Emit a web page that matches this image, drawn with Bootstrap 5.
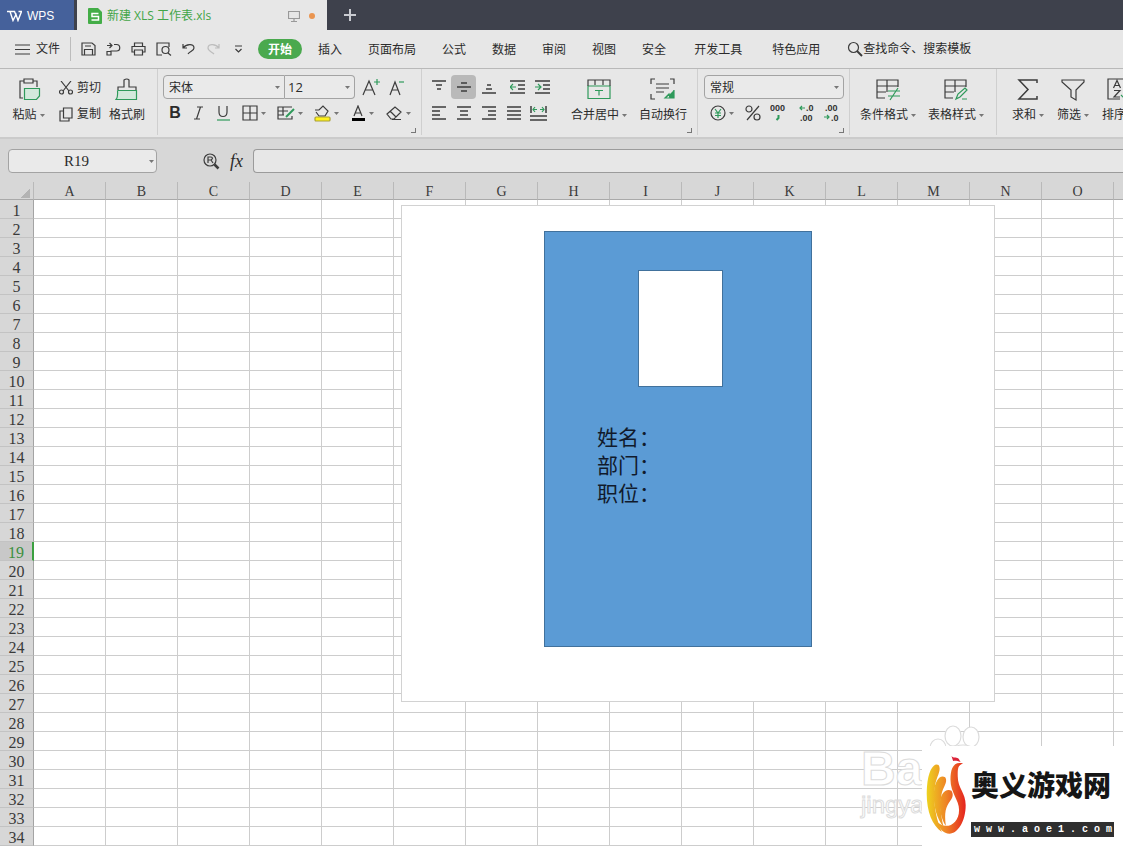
<!DOCTYPE html>
<html lang="zh-CN">
<head>
<meta charset="utf-8">
<meta name="viewport" content="width=device-width, initial-scale=1">
<title>新建 XLS 工作表.xls - WPS</title>
<link href="https://cdn.jsdelivr.net/npm/bootstrap@5.3.0/dist/css/bootstrap.min.css" rel="stylesheet">
<style>
body{font-family:"Liberation Sans","Noto Sans CJK SC",sans-serif;font-size:12px;line-height:16px;color:#2b2b2b;background:#fff}
button,select,input{font:inherit;color:inherit}
button{border:0;background:none;padding:0;white-space:nowrap}
svg{display:block;fill:none;stroke:#3c3c3c;stroke-width:1.2;flex:none}
svg .g{stroke:#2f9a5b}
.titlebar{height:30px;background:#3e414c}
.brand{width:74px;background:#45619b;color:#fff;margin-right:3px;padding:2px 0 0 7px;gap:5px}
.brand svg{stroke:#fff;stroke-width:1.4}
.doc{width:250px;background:#e7e7e7;color:#43a548;padding:2px 12px 0 11px;gap:5px}
.doc button{font-family:"Open Sans","Noto Sans CJK SC",sans-serif}
.dot{width:6px;height:6px;background:#ea9550}
.plus{width:46px}
.plus svg{stroke:#c9cbd1;stroke-width:2}
.menubar{height:38px;background:#e7e7e7}
.file{width:71px;height:24px;padding-left:15px;gap:6px;border-right:1px solid #bcbcbc}
.quick{width:187px;padding-left:5px}
.quick button{width:25px;height:24px}
.tabs{gap:26px}
.tabs button{padding-top:2px}
.tabs .on{background:#4aa94e;color:#fff;font-weight:bold;border-radius:10px;height:20px;padding:1px 10px 0;margin-right:-10px}
.tabs .four{padding:2px 2px 0}
.find{gap:0;padding-left:25px}
.find input{width:130px;border:0;background:none;padding:0;outline:0}
.find input::placeholder{color:#2b2b2b;opacity:1}
.ribbon{height:71px;background:#e7e7e7;border-top:1px solid #b9b9b9;border-bottom:2px solid #cbcbcb;overflow:hidden}
.pane{position:relative;padding:6px 0 0 6px;height:66px;border-right:1px solid #cfcfcf;flex:none}
.tools{gap:2px}
.line{height:24px;padding-top:2px}
.tool{height:24px;width:25px}
.tool.wide{width:36px;gap:3px}
.tool.on{background:#b9b9b9;border-radius:4px}
.big{height:50px}
.big>svg{height:30px;margin:0 auto}
.big>span{height:20px;gap:3px}
.corner{position:absolute;right:5px;bottom:2px;width:5px;height:5px;border:solid #777;border-width:0 1px 1px 0}
.caret{width:5px;height:3px;fill:#777;stroke:none}
.box{appearance:none;height:24px;border:1px solid #a3a3a3;background:#eaeaea url("data:image/svg+xml,%3Csvg xmlns='http://www.w3.org/2000/svg' width='5' height='3'%3E%3Cpath d='M0 0h5L2.5 3z' fill='%23777'/%3E%3C/svg%3E") no-repeat right 4px center;padding:2px 0 0 5px;border-radius:4px}
.fname{width:122px;border-radius:4px 0 0 4px}
.fsize{width:70px;border-radius:0 4px 4px 0;border-left:0;padding:0 0 0 3px;margin-right:3px;font-family:"Open Sans",sans-serif;font-size:13px}
.nformat{width:140px}
.bold{font-size:16px;font-weight:bold}
.g000{stroke:none;fill:#333;font:bold 9px "Liberation Sans",sans-serif}
.formula{height:43px;background:#d7d7d7;padding:10px 0 9px 8px}
.cellname{width:149px;text-align:center;font:15px "Liberation Serif",serif;padding:0 12px 0 0;background-position:right 2px center}
.locate{margin-left:46px}
.fx{font:italic 18px "Liberation Serif",serif;width:33px}
.expr{border:1px solid #9b9b9b;border-right:0;border-radius:4px 0 0 4px;background:#e7e7e7;height:24px;padding:0 8px}
.sheet{position:relative;flex:1;overflow:hidden;min-height:0}
.cells{table-layout:fixed;border-collapse:separate;border-spacing:0;width:0;font:16px/16px "Liberation Serif",serif;color:#3a3a3a}
.cells col{width:72px}
.cells col:first-child{width:34px}
.cells td,.cells th{padding:0;height:19px;border:solid #cdcdcd;border-width:0 1px 1px 0;font-weight:normal;text-align:center;overflow:hidden}
.cells thead th{height:18px;line-height:14px;font-size:14px;background:#d7d7d7;border-color:#b5b5b5 #b9b9b9 #a9a9a9;padding-top:3px}
.cells tbody th{background:#d7d7d7;border-right-color:#a4a4a4;border-bottom-color:#c3c3c3;line-height:14px;padding-top:4px}
.cells tbody .here{background:#c8c8c8;color:#3b8f3e;border-right:2px solid #3ba040}
.all{width:10px;height:9px;margin:2px 3px 0 auto;background:linear-gradient(135deg,transparent 50%,#b3b3b3 50%)}
.canvas{position:absolute;left:401px;top:23px;width:594px;height:497px;background:#fff;border:1px solid #d2d2d2;padding:25px 0 0 142px}
.pass{width:268px;height:416px;background:#5b9bd5;border:1px solid #41719c;padding:38px 0 0 52px;color:#111a2c;font-size:21px;line-height:28px}
.photo{width:85px;height:117px;background:#fff;border:1px solid #41719c;margin:0 0 37px 41px}
.mark-a{position:absolute;right:142px;bottom:17px;width:120px;height:104px;color:#fff;font:24px/26px "Liberation Sans",sans-serif;-webkit-text-stroke:1px #dcdcdc}
.mark-a b{display:block;font-size:48px;line-height:46px;padding-top:21px}
.paw{position:absolute;left:68px;top:0}
.paw ellipse{fill:#fff;stroke:#dcdcdc}
.mark-b{position:absolute;right:0;bottom:0;width:201px;height:100px;background:#fff;padding:8px 9px 0 4px;gap:4px}
.flame{stroke:none}
.site{font-size:28px;line-height:66px;font-weight:900;color:#161616;white-space:nowrap}
.addr{background:#2f2f2f;color:#fff;font:bold 10px/15px "Liberation Mono",monospace;height:15px;padding-left:3px;margin-top:2px;white-space:nowrap}
</style>
<script src="https://cdn.jsdelivr.net/npm/bootstrap@5.3.0/dist/js/bootstrap.bundle.min.js"></script>
</head>
<body class="vh-100 d-flex flex-column overflow-hidden">
<svg class="d-none"><symbol id="down" viewBox="0 0 5 3"><path d="M0 0h5L2.500 3z"/></symbol></svg>

<header class="titlebar d-flex">
  <button class="brand d-flex align-items-center"><svg width="15" height="12"><path d="M0 1.500h3l3 9 3-6 2 6 3.500-9h-3M3.500 1.500h4l2 5"/></svg>WPS</button>
  <div class="doc d-flex align-items-center">
    <svg width="14" height="16"><path d="M1 0h9l4 4v11a1 1 0 0 1-1 1H1a1 1 0 0 1-1-1V1a1 1 0 0 1 1-1" fill="#43ad47" stroke="none"/><path d="M10.500 5.500H4v3h6.500v3.500H3.500" stroke="#fff" stroke-width="1.500"/></svg>
    <button>新建 XLS 工作表.xls</button>
    <svg class="ms-auto me-1" width="12" height="12" style="stroke:#999"><path d="M.5 1.500h11v7H.5zM6 8.500v3M3 11.500h6"/></svg>
    <span class="dot rounded-circle"></span>
  </div>
  <button class="plus d-flex align-items-center justify-content-center" aria-label="新建标签"><svg width="12" height="12"><path d="M6 0v12M0 6h12"/></svg></button>
</header>

<nav class="menubar d-flex align-items-center text-nowrap">
  <button class="file d-flex align-items-center"><svg width="15" height="11"><path d="M0 1h15M0 5.500h15M0 10h15"/></svg>文件</button>
  <div class="quick d-flex">
    <button class="d-flex align-items-center justify-content-center" aria-label="保存"><svg width="15" height="14"><path d="M1 1h10l3 2.500V13H1zM3.500 13V7.500h8V13M4 4h6"/></svg></button>
    <button class="d-flex align-items-center justify-content-center" aria-label="输出"><svg width="15" height="14"><path d="M1 3.500h5M3.500 1 6 3.500 3.500 6M8 2.500h2.500a3 3 0 0 1 0 6.500H5v4H1V9.500h4"/></svg></button>
    <button class="d-flex align-items-center justify-content-center" aria-label="打印"><svg width="15" height="14"><path d="M3.500 4.500V1h8v3.500M3.500 10H1V4.500h13V10h-2.500M3.500 8h8v5h-8z"/></svg></button>
    <button class="d-flex align-items-center justify-content-center" aria-label="打印预览"><svg width="16" height="14"><path d="M6 13H1V1h12v4M12 11l3 2.500"/><circle cx="9.500" cy="8" r="3.500"/></svg></button>
    <button class="d-flex align-items-center justify-content-center" aria-label="撤销"><svg width="13" height="12"><path d="M1 1v4h4M1 5c3-4 11-5 11 0 0 3-4 3-6 6"/></svg></button>
    <button class="d-flex align-items-center justify-content-center" aria-label="恢复"><svg width="13" height="12" style="stroke:#bdbdbd"><path d="M12 1v4H8M12 5C9 1 1 0 1 5c0 3 4 4 6 6"/></svg></button>
    <button class="d-flex align-items-center justify-content-center" aria-label="更多"><svg width="9" height="8"><path d="M1 1h7M1.500 4l3 3 3-3"/></svg></button>
  </div>
  <div class="tabs d-flex align-items-center">
    <button class="on">开始</button><button>插入</button><button>页面布局</button><button>公式</button><button>数据</button><button>审阅</button><button>视图</button><button>安全</button><button class="four">开发工具</button><button class="four">特色应用</button>
  </div>
  <label class="find d-flex align-items-center"><svg width="16" height="16" aria-hidden="true"><circle cx="6.500" cy="6.500" r="5"/><path d="m10 10 5 5" stroke-width="2"/></svg><input aria-label="查找" placeholder="查找命令、搜索模板"></label>
</nav>

<section class="ribbon d-flex">
  <div class="pane d-flex" style="width:158px">
    <button class="big" style="width:45px"><svg width="26" height="30"><path d="M7 23H4V6h4m9 0h4v6M8 4h9v4H8z"/><path class="g" d="M8.500 13.500h15V21l-3 3.500h-12z" fill="#d3e9dc"/></svg><span class="d-flex justify-content-center align-items-center">粘贴<svg class="caret"><use href="#down"/></svg></span></button>
    <div class="tools d-flex flex-column ps-2 pe-1">
      <button class="line d-flex align-items-center gap-1"><svg width="14" height="14"><path d="M2 0l8 10M12 0 4 10"/><circle cx="2.500" cy="11" r="2"/><circle cx="11.500" cy="11" r="2"/></svg>剪切</button>
      <button class="line d-flex align-items-center gap-1"><svg width="14" height="15"><path d="M4.500 1H13v10H4.500zM4 4H1v10h9v-3"/></svg>复制</button>
    </div>
    <button class="big ms-1"><svg width="24" height="30"><path class="g" d="M2.500 15.500h19v9H1q2-2 1.500-9" fill="#d3e9dc"/><path d="M3 15v-3h6V5q3-2 5 0v7h7v3"/></svg><span class="d-flex align-items-center">格式刷</span></button>
  </div>

  <div class="pane tools d-flex flex-column" style="width:264px">
    <div class="d-flex">
      <select class="box fname" aria-label="字体" style="margin-left:-1px"><option>宋体</option></select>
      <select class="box fsize" aria-label="字号"><option>12</option></select>
      <button class="tool d-flex align-items-center justify-content-center" aria-label="增大字号"><svg width="18" height="18"><path d="m1 17 6-14 6 14M3 12h8"/><path class="g" d="M12 4h6M15 1v6"/></svg></button>
      <button class="tool d-flex align-items-center justify-content-center" aria-label="减小字号"><svg width="18" height="18"><path d="m3 17 5-13 5 13M5 12h6"/><path class="g" d="M12 4h5"/></svg></button>
    </div>
    <div class="d-flex">
      <button class="tool bold" style="width:22px">B</button>
      <button class="tool d-flex align-items-center justify-content-center" aria-label="斜体"><svg width="12" height="14"><path d="M4 1h6M1 13h6M7.500 1l-4 12" /></svg></button>
      <button class="tool d-flex align-items-center justify-content-center" aria-label="下划线"><svg width="13" height="15"><path d="M2 0v6c0 6 8 6 8 0V0"/><path class="g" d="M0 14h13"/></svg></button>
      <button class="tool wide d-flex align-items-center justify-content-center" aria-label="边框"><svg width="16" height="16"><path d="M1 1h14v14H1zM8 1v14M1 8h14"/></svg><svg class="caret"><use href="#down"/></svg></button>
      <button class="tool wide d-flex align-items-center justify-content-center" aria-label="绘制边框"><svg width="18" height="16"><path d="M15 2H1v12h14v-3M1 6h10M1 10h6M6 2v8"/><path class="g" d="m9 12 8-8" stroke-width="2"/></svg><svg class="caret"><use href="#down"/></svg></button>
      <button class="tool wide d-flex align-items-center justify-content-center" aria-label="填充颜色"><svg width="17" height="17"><path d="M1 5h4l4-4 5 5-3 5H5L2 7"/><rect x="1" y="12" width="15" height="4" rx="1" fill="#fff21b" stroke="#aaa036"/></svg><svg class="caret"><use href="#down"/></svg></button>
      <button class="tool wide d-flex align-items-center justify-content-center" aria-label="字体颜色"><svg width="15" height="17"><path d="m3 11 4-10 4 10M4 8h6"/><path d="M1 14.500h13" stroke="#000" stroke-width="3"/></svg><svg class="caret"><use href="#down"/></svg></button>
      <button class="tool wide d-flex align-items-center justify-content-center" aria-label="清除"><svg width="17" height="16"><path d="m1 9 8-7 6 5-7 7H5zM4 6l6 6M6 14.500h9"/></svg><svg class="caret"><use href="#down"/></svg></button>
    </div>
    <i class="corner"></i>
  </div>

  <div class="pane d-flex" style="width:276px;padding-left:4px">
    <div class="tools d-flex flex-column me-3">
      <div class="d-flex">
        <button class="tool d-flex align-items-center justify-content-center" aria-label="顶端对齐"><svg width="14" height="14"><path d="M0 1h14M4 5h6M5 9h4" stroke-width="1.500"/></svg></button>
        <button class="tool on d-flex align-items-center justify-content-center" aria-label="垂直居中"><svg width="14" height="14"><path d="M4 3h6M0 7h14M4 11h6" stroke-width="1.500"/></svg></button>
        <button class="tool d-flex align-items-center justify-content-center" aria-label="底端对齐"><svg width="14" height="14"><path d="M5 5h4M4 9h6M0 13h14" stroke-width="1.500"/></svg></button>
        <button class="tool d-flex align-items-center justify-content-center ms-1" aria-label="减少缩进"><svg width="15" height="14"><path d="M0 1h15M8 5h7M8 9h7M0 13h15" stroke-width="1.500"/><path class="g" d="M0 7h6M3 4 0 7l3 3"/></svg></button>
        <button class="tool d-flex align-items-center justify-content-center" aria-label="增加缩进"><svg width="15" height="14"><path d="M0 1h15M8 5h7M8 9h7M0 13h15" stroke-width="1.500"/><path class="g" d="M0 7h6M3 4l3 3-3 3"/></svg></button>
      </div>
      <div class="d-flex">
        <button class="tool d-flex align-items-center justify-content-center" aria-label="左对齐"><svg width="14" height="14"><path d="M0 1h14M0 5h8M0 9h8M0 13h14" stroke-width="1.500"/></svg></button>
        <button class="tool d-flex align-items-center justify-content-center" aria-label="居中"><svg width="14" height="14"><path d="M0 1h14M3 5h8M3 9h8M0 13h14" stroke-width="1.500"/></svg></button>
        <button class="tool d-flex align-items-center justify-content-center" aria-label="右对齐"><svg width="14" height="14"><path d="M0 1h14M6 5h8M6 9h8M0 13h14" stroke-width="1.500"/></svg></button>
        <button class="tool d-flex align-items-center justify-content-center" aria-label="两端对齐"><svg width="14" height="14"><path d="M0 1h14M0 5h14M0 9h14M0 13h14" stroke-width="1.500"/></svg></button>
        <button class="tool d-flex align-items-center justify-content-center" aria-label="分散对齐"><svg width="17" height="15"><path d="M1 0v7M16 0v7M0 10h17M0 14h17" stroke-width="1.500"/><path class="g" d="M3 3.500h4M5 1 3 3.500 5 6M10 3.500h4M12 1l2 2.500L12 6"/></svg></button>
      </div>
    </div>
    <button class="big"><svg width="24" height="30"><path class="g" d="M1 11h22v12.500H1zM8 15.500h8M12 15.500v5"/><path d="M1 11V5h22v6M8 5v5M16 5v5"/></svg><span class="d-flex align-items-center">合并居中<svg class="caret"><use href="#down"/></svg></span></button>
    <button class="big" style="margin-left:12px"><svg width="26" height="30"><path d="M1 9V4h4M20 4h4v5M1 19v5h4M6 9h13M6 13h13M6 17h8" /><path class="g" d="M24 15v8h-8M19 19l-4 4h5z" fill="#2f9a5b"/></svg><span class="d-flex align-items-center">自动换行</span></button>
    <i class="corner"></i>
  </div>

  <div class="pane tools d-flex flex-column" style="width:152px">
    <select class="box nformat" aria-label="数字格式"><option>常规</option></select>
    <div class="d-flex">
      <button class="tool wide d-flex align-items-center justify-content-center" aria-label="货币"><svg width="16" height="16"><circle cx="8" cy="8" r="7"/><path class="g" d="m5 4 3 4 3-4M8 8v5M5 8h6M5 10.500h6"/></svg><svg class="caret"><use href="#down"/></svg></button>
      <button class="tool d-flex align-items-center justify-content-center" aria-label="百分比"><svg width="16" height="16"><circle cx="4" cy="4" r="3"/><circle cx="12" cy="12" r="3"/><path d="M14 1 2 15"/></svg></button>
      <button class="tool d-flex align-items-center justify-content-center" aria-label="千位分隔"><svg width="16" height="18"><text class="g000" x="0" y="7">000</text><path class="g" d="M8.500 11v3l-2 2" stroke-width="2"/></svg></button>
      <button class="tool d-flex align-items-center justify-content-center ms-1" aria-label="增加小数位数"><svg width="15" height="18"><path class="g" d="M1 4h5M3 2 1 4l2 2"/><text class="g000" x="7" y="7">.0</text><text class="g000" x="1" y="17">.00</text></svg></button>
      <button class="tool d-flex align-items-center justify-content-center" aria-label="减少小数位数"><svg width="15" height="18"><text class="g000" x="1" y="7">.00</text><path class="g" d="M0 13h5M3 11l2 2-2 2"/><text class="g000" x="7" y="17">.0</text></svg></button>
    </div>
    <i class="corner"></i>
  </div>

  <div class="pane d-flex" style="width:147px;gap:12px;padding-left:10px">
    <button class="big"><svg width="24" height="30"><path d="M22 12V5H1v18h8M1 11h21M1 17h9M11 5v12"/><path class="g" d="M12 16h12M12 21h12M22 13l-8 12"/></svg><span class="d-flex align-items-center">条件格式<svg class="caret"><use href="#down"/></svg></span></button>
    <button class="big"><svg width="24" height="30"><path d="M22 12V5H1v18h8M1 11h21M1 17h9M11 5v12"/><path class="g" d="m12 24 2-5 7-6 2 2-7 7zM18 24h5"/></svg><span class="d-flex align-items-center">表格样式<svg class="caret"><use href="#down"/></svg></span></button>
  </div>

  <div class="pane d-flex border-0" style="gap:13px;padding-left:15px">
    <button class="big"><svg width="22" height="30"><path d="M20 8V5H2l9 9.500L2 24h18v-3" stroke-width="1.500"/></svg><span class="d-flex align-items-center">求和<svg class="caret"><use href="#down"/></svg></span></button>
    <button class="big"><svg width="24" height="30"><path d="M1 5h22v2l-8 8v10l-5-3v-7L1 7z"/></svg><span class="d-flex align-items-center">筛选<svg class="caret"><use href="#down"/></svg></span></button>
    <button class="big"><svg width="24" height="30"><path d="M14 24H2V4h18v7M7.500 13 11 5.500l3.500 7.500M9 10.500h4M8 15.500h6L8 22h6"/><path class="g" d="M19 14v10M15 20l4 4 3-3"/></svg><span class="d-flex align-items-center">排序<svg class="caret"><use href="#down"/></svg></span></button>
  </div>
</section>

<div class="formula d-flex align-items-center">
  <input class="box cellname" aria-label="名称框" value="R19">
  <button class="locate" aria-label="定位"><svg width="17" height="17"><circle cx="7" cy="7" r="6"/><path d="M5 10V4h3q3 1 0 3H5M8 7l2 3"/><path d="m11.500 11.500 4 4" stroke-width="2.500"/></svg></button>
  <button class="fx">fx</button>
  <input class="expr flex-grow-1" aria-label="编辑栏">
</div>

<main class="sheet">
  <table class="cells"><colgroup></colgroup><thead></thead><tbody></tbody></table>
  <div class="canvas">
    <div class="pass">
      <div class="photo"></div>
      <div>姓名：</div><div>部门：</div><div>职位：</div>
    </div>
  </div>
  <div class="mark-a">
    <svg class="paw" width="56" height="60"><ellipse cx="9" cy="23" rx="8" ry="9"/><ellipse cx="24" cy="11" rx="8" ry="10"/><ellipse cx="42" cy="12" rx="8" ry="10"/><ellipse cx="34" cy="36" rx="18" ry="16"/></svg>
    <b>Bai</b>jingyan
  </div>
  <div class="mark-b d-flex">
    <svg class="flame" width="41" height="82" viewBox="256 192 124 246">
      <defs><linearGradient id="fire" gradientUnits="userSpaceOnUse" x1="258" y1="300" x2="376" y2="300"><stop offset="0" stop-color="#edd31f"/><stop offset=".5" stop-color="#ee8426"/><stop offset="1" stop-color="#e5231f"/></linearGradient></defs>
      <g fill="url(#fire)"><path d="M294 224c-14-8-31 15-35 65-5 65 12 115 45 138-20-45-26-90-21-136 2-30 22-50 11-67z"/><path d="M314 261c-16-9-31 10-34 45-3 43 10 83 29 105-9-36-11-70-6-98 3-20 21-38 11-52z"/><path d="M333 302c-18-9-35 12-35 40 0 28 8 52 18 66-5-40-1-55 14-76 8-12 9-20 3-30z"/>
      <path d="M368 220c-30-8-38 18-38 48 0 40 26 62 26 92 0 33-22 50-42 48-8 0-18-6-25-12 8 22 20 36 38 36 25 0 49-38 49-86 0-40-24-50-24-88 0-24 0-32 16-38z" /></g>
      <path d="M333 197c6 7 14 3 20 7 4 3 4 8 8 11-10-3-16-5-23-3z" fill="#dc2338"/>
    </svg>
    <div class="flex-grow-1">
      <div class="site">奥义游戏网</div>
      <div class="addr">w w w . a o e 1 . c o m</div>
    </div>
  </div>
</main>

<script>
// Fill the visible sheet with as many columns and rows as the window shows.
// A column whose centred letter would fall outside the window gets no letter.
const width = innerWidth - 34, table = document.querySelector('.cells');
const rows = Math.ceil((document.querySelector('.sheet').clientHeight - 18) / 19);
const letters = Array.from({length: Math.min(Math.ceil(width / 72), 26)}, (_, i) =>
  i * 72 + 44 < width ? String.fromCharCode(65 + i) : '');
table.querySelector('colgroup').innerHTML = '<col>'.repeat(letters.length + 1);
table.tHead.innerHTML = '<tr><th><div class="all"></div></th>' + letters.map(l => `<th scope="col">${l}</th>`).join('') + '</tr>';
table.tBodies[0].innerHTML = Array.from({length: rows}, (_, r) =>
  `<tr><th scope="row"${r === 18 ? ' class="here"' : ''}>${r + 1}</th>${'<td></td>'.repeat(letters.length)}</tr>`).join('');
</script>
</body>
</html>
